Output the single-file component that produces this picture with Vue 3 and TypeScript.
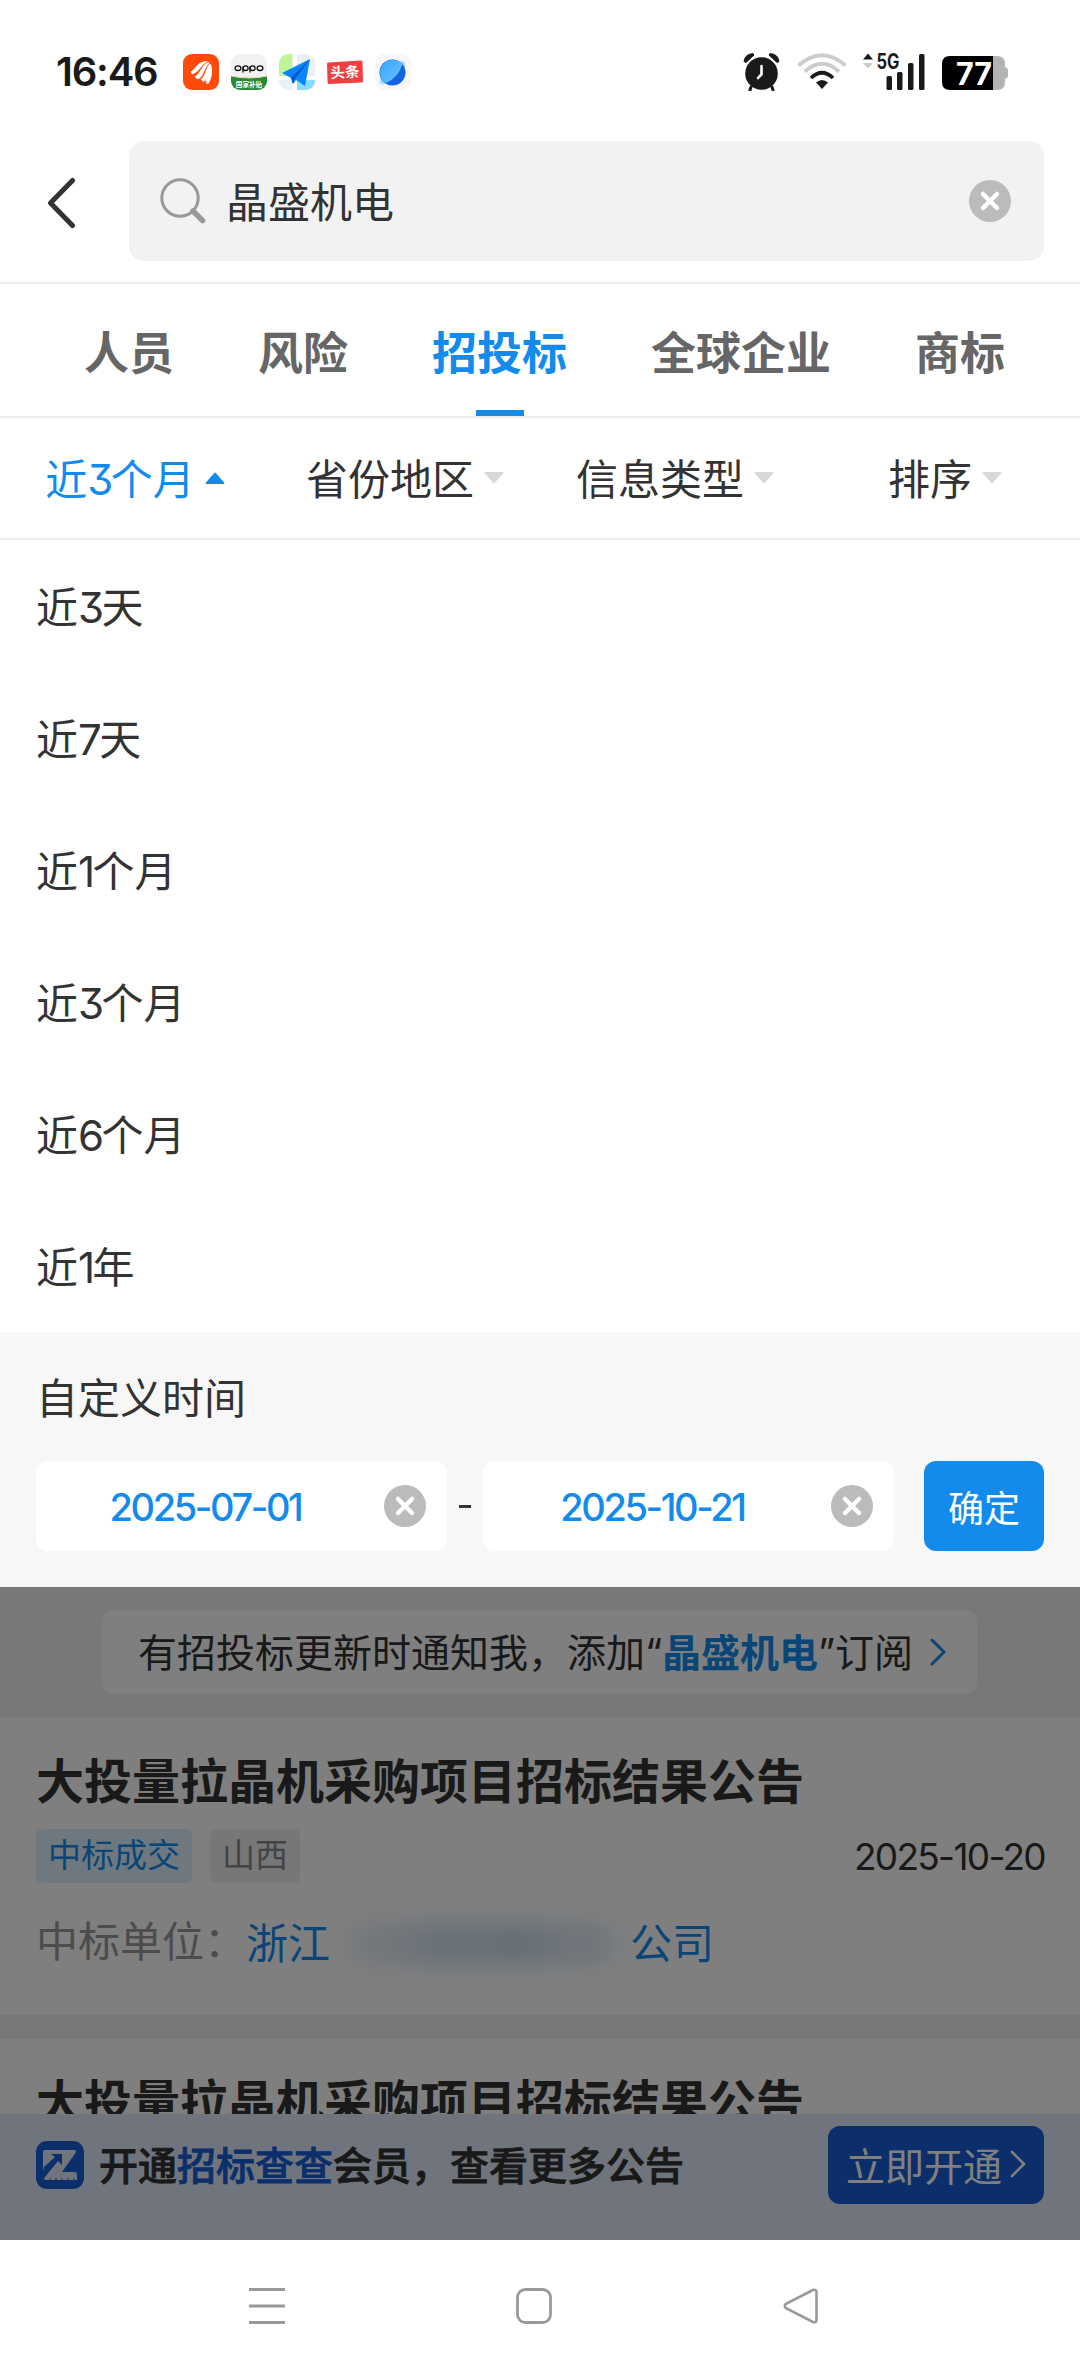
<script setup lang="ts">
import { ref } from 'vue'

interface Filter { label: string; active: boolean }
interface Notice { title: string; status: string; region: string; date: string }
interface Piece { text: string; digit: boolean }

const keyword = ref<string>('晶盛机电')
const tabs: string[] = ['人员', '风险', '招投标', '全球企业', '商标']
const activeTab = ref<string>('招投标')
const filters: Filter[] = [
  { label: '近3个月', active: true },
  { label: '省份地区', active: false },
  { label: '信息类型', active: false },
  { label: '排序', active: false },
]
const ranges: string[] = ['近3天', '近7天', '近1个月', '近3个月', '近6个月', '近1年']
const startDate = ref<string>('2025-07-01')
const endDate = ref<string>('2025-10-21')
const notice: Notice = {
  title: '大投量拉晶机采购项目招标结果公告',
  status: '中标成交',
  region: '山西',
  date: '2025-10-20',
}

// Splits a label so that its digits can be set a little tighter than the Han characters.
function pieces(label: string): Piece[] {
  return label.split(/(\d+)/).filter(Boolean).map((text) => ({ text, digit: /\d/.test(text) }))
}
</script>

<template>
  <div class="screen">
    <header class="status">
      <span class="clock">16:46</span>
      <div class="apps">
        <svg width="36" height="36" viewBox="0 0 36 36">
          <rect width="36" height="36" rx="9" fill="#ff4a0a" />
          <path d="M7.500 17.500C12 16 14 8 23 7L25 7.500C18 10 17 18 9 20.500Z M11.500 22.500C18 20 17.500 11 25.500 8L26.500 9C21 13 21.500 23 14.500 25.500Z M17.500 25.500C23.500 21 22 13.500 27 9.500L28 10.500C30 17 29 25 25 30L23 29.500L23.500 26L20.500 28Z" fill="#fff" />
        </svg>
        <svg width="36" height="36" viewBox="0 0 36 36">
          <defs><clipPath id="oppoClip"><rect width="36" height="36" rx="9" /></clipPath></defs>
          <g clip-path="url(#oppoClip)">
            <rect width="36" height="36" fill="#f1f1f1" />
            <path d="M0 22Q18 26 36 22V36H0Z" fill="#248a34" />
            <path d="M0 22Q18 26 36 22" stroke="#e8d9a0" fill="none" />
          </g>
          <g fill="none" stroke="#111" stroke-width="1.300">
            <ellipse cx="7" cy="14.200" rx="2.900" ry="2.300" /><ellipse cx="14.600" cy="14.200" rx="2.500" ry="2.300" />
            <ellipse cx="21.600" cy="14.200" rx="2.500" ry="2.300" /><ellipse cx="29" cy="14.200" rx="2.900" ry="2.300" />
            <path d="M12 12.500V18.500M19 12.500V18.500" />
          </g>
          <text x="18" y="32.500" text-anchor="middle" font-size="6.600" font-weight="700" fill="#fff" class="mini">国家补贴</text>
        </svg>
        <svg width="36" height="36" viewBox="0 0 36 36">
          <defs><clipPath id="mapClip"><rect width="36" height="36" rx="9" /></clipPath></defs>
          <g clip-path="url(#mapClip)">
            <rect width="36" height="36" fill="#fff" />
            <rect width="13.500" height="22" fill="#bff598" />
            <rect x="18" width="18" height="22" fill="#e9f1f1" />
            <rect y="26" width="14" height="10" fill="#e9f1f4" />
            <rect x="18" y="26" width="18" height="10" fill="#86dcff" />
          </g>
          <path d="M31 5L3 19L12 24L14 30L17 26L26 32Z" fill="#0a84ff" />
          <path d="M31 5L12 24L14 30L16 25Z" fill="#0557c8" />
        </svg>
        <svg width="36" height="36" viewBox="0 0 36 36">
          <path d="M1 8.500L34 6.500Q35.500 6.500 35.500 8L36 27Q36 28.500 34.500 28.600L2 30Q.6 30 .6 28.500L0 10Q0 8.600 1 8.500Z" fill="#f33f41" />
          <text x="18" y="23.500" text-anchor="middle" font-size="14.500" font-weight="700" fill="#fff" transform="rotate(-3 18 18)" class="mini">头条</text>
        </svg>
        <svg width="36" height="36" viewBox="0 0 36 36">
          <defs><linearGradient id="planet" x1="0" y1="0" x2="1" y2="1"><stop offset="0" stop-color="#39a7ff" /><stop offset="1" stop-color="#69c1ff" /></linearGradient></defs>
          <rect width="36" height="36" rx="9" fill="#f7f7f8" />
          <path d="M5 25Q3 32 10 30L30 13Q31.500 5 24 7.500Z" fill="#a9ddfa" />
          <circle cx="17.500" cy="18.500" r="13" fill="#1262e4" />
          <path d="M27.500 10Q24 23 10.500 29.500A13 13 0 1 1 27.500 10Z" fill="url(#planet)" />
        </svg>
      </div>
      <div class="signals">
        <svg class="alarm" width="37" height="38" viewBox="0 0 37 38">
          <circle cx="18.500" cy="20.500" r="16.300" fill="#1a1a1a" />
          <path d="M1 8.500Q2 1 10 .6L11 2L3 9.500Z M36 8.500Q35 1 27 .6L26 2L34 9.500Z" fill="#1a1a1a" stroke="#1a1a1a" stroke-linejoin="round" />
          <path d="M8 34L7 37M29 34L30 37" stroke="#1a1a1a" stroke-width="3" stroke-linecap="round" />
          <path d="M18.500 13V21.500L15 25" stroke="#fff" stroke-width="2.600" fill="none" stroke-linecap="round" />
        </svg>
        <svg class="wifi" width="50" height="37" viewBox="0 0 50 37">
          <g fill="none" stroke-width="3.800">
            <path d="M1.500 12.500Q25 -8 48.500 12.500" stroke="#ccc" />
            <path d="M8 18.500Q25 3 42 18.500" stroke="#ccc" />
            <path d="M14 25Q25 14.500 36 25" stroke="#1a1a1a" />
          </g>
          <path d="M19 29.500Q25 24.500 31 29.500L25 36Z" fill="#1a1a1a" />
        </svg>
        <svg class="cell" width="64" height="42" viewBox="0 -4 64 42">
          <path d="M1 7.500L6 1.500L11 7.500Z" fill="#1a1a1a" /><path d="M1 11H11L6 16.500Z" fill="#ccc" />
          <text x="14.500" y="17" font-size="21" font-weight="700" fill="#1a1a1a" textLength="23" lengthAdjust="spacingAndGlyphs" class="latin">5G</text>
          <g fill="#1a1a1a"><rect x="24.500" y="24" width="5.500" height="14" rx="1.500" /><rect x="35" y="20" width="5.500" height="18" rx="1.500" /><rect x="46" y="11" width="5.500" height="27" rx="1.500" /><rect x="57" y="2" width="5.500" height="36" rx="1.500" /></g>
        </svg>
        <svg class="battery" width="67" height="34" viewBox="0 0 67 34">
          <path d="M51 0H55Q63 0 63 8V11Q66 12 66 14V20Q66 22 63 23V26Q63 34 55 34H51Z" fill="#b3b3b3" />
          <path d="M8 0H51V34H8Q0 34 0 26V8Q0 0 8 0Z" fill="#000" />
          <text x="14" y="28.500" font-size="31" font-weight="700" fill="#fff" textLength="36" lengthAdjust="spacingAndGlyphs" class="latin">77</text>
        </svg>
      </div>
    </header>

    <div class="searchbar">
      <svg class="back" width="30" height="54" viewBox="0 0 30 54"><path d="M26.500 4.500L4.500 27L26.500 49.500" fill="none" stroke="#333" stroke-width="5" stroke-linecap="round" stroke-linejoin="round" /></svg>
      <div class="field">
        <svg width="46" height="48" viewBox="0 0 46 48"><circle cx="20" cy="21" r="18.200" fill="none" stroke="#999" stroke-width="3" /><path d="M33 34L42.500 43.500" stroke="#999" stroke-width="5.500" stroke-linecap="round" /></svg>
        <span class="keyword">{{ keyword }}</span>
        <svg class="clear" width="42" height="42" viewBox="0 0 42 42"><circle cx="21" cy="21" r="21" fill="#bbb" /><path d="M14 14L28 28M28 14L14 28" stroke="#fff" stroke-width="4.500" stroke-linecap="round" /></svg>
      </div>
    </div>

    <nav class="tabs">
      <span v-for="t in tabs" :key="t" class="tab" :class="{ on: t === activeTab }">{{ t }}</span>
    </nav>

    <div class="filters">
      <div v-for="f in filters" :key="f.label" class="filter" :class="{ on: f.active }">
        <span class="name"><span v-for="(p, i) in pieces(f.label)" :key="i" :class="{ num: p.digit }">{{ p.text }}</span></span>
        <svg width="20" height="12" viewBox="0 0 20 12">
          <path :d="f.active ? 'M1.500 11L10 1.500L18.500 11Z' : 'M1.500 1L10 10.500L18.500 1Z'" fill="currentColor" stroke="currentColor" stroke-width="1.800" stroke-linejoin="round" />
        </svg>
      </div>
    </div>

    <ul class="ranges">
      <li v-for="r in ranges" :key="r"><span v-for="(p, i) in pieces(r)" :key="i" :class="{ num: p.digit }">{{ p.text }}</span></li>
    </ul>

    <section class="custom">
      <h3>自定义时间</h3>
      <div class="row">
        <div class="date">
          <span>{{ startDate }}</span>
          <svg width="42" height="42" viewBox="0 0 42 42"><circle cx="21" cy="21" r="21" fill="#bbb" /><path d="M14 14L28 28M28 14L14 28" stroke="#fff" stroke-width="4.500" stroke-linecap="round" /></svg>
        </div>
        <i class="dash"></i>
        <div class="date">
          <span>{{ endDate }}</span>
          <svg width="42" height="42" viewBox="0 0 42 42"><circle cx="21" cy="21" r="21" fill="#bbb" /><path d="M14 14L28 28M28 14L14 28" stroke="#fff" stroke-width="4.500" stroke-linecap="round" /></svg>
        </div>
        <button class="ok">确定</button>
      </div>
    </section>

    <main class="content">
      <div class="results">
        <div class="banner">
          <div class="subscribe">
            <span>有招投标更新时通知我，添加<q>“</q><b>晶盛机电</b><q>”</q>订阅</span>
            <svg width="16" height="28" viewBox="0 0 16 28"><path d="M2 2L14 14L2 26" fill="none" stroke="#128bed" stroke-width="3" stroke-linecap="round" stroke-linejoin="round" /></svg>
          </div>
        </div>
        <article class="card first">
          <h2>{{ notice.title }}</h2>
          <div class="meta">
            <span class="tag blue">{{ notice.status }}</span>
            <span class="tag">{{ notice.region }}</span>
            <time>{{ notice.date }}</time>
          </div>
          <p class="winner">
            <span class="label">中标单位：</span>
            <span class="link">浙江</span>
            <span class="masked"><i></i></span>
            <span class="link">公司</span>
          </p>
        </article>
        <article class="card second"><h2>{{ notice.title }}</h2></article>
      </div>
      <footer class="vip">
        <svg width="48" height="48" viewBox="0 0 48 48">
          <rect width="48" height="48" rx="11" fill="#185ed6" />
          <path d="M9 9H38Q41 9 39.500 12L26 31H38Q41 31 41 34V39H10Q7 39 9 36L26 15V24L20 19L8 30Q7 28 7 25V11Q7 9 9 9Z" fill="#e1ebfa" />
          <path d="M8 26L19 16L15 13H26V24L22 20L10 32L8 31Z" fill="#185ed6" />
          <path d="M14 37V40M20 37V40M26 37V40M32 37V40M38 37V40" stroke="#185ed6" stroke-width="1" />
        </svg>
        <span class="pitch">开通<em>招标查查</em>会员，查看更多公告</span>
        <button>立即开通<svg width="16" height="28" viewBox="0 0 16 28"><path d="M2 2L14 14L2 26" fill="none" stroke="#fff" stroke-width="2.600" stroke-linecap="round" stroke-linejoin="round" /></svg></button>
      </footer>
      <div class="mask"></div>
    </main>

    <div class="sysnav">
      <svg width="36" height="36" viewBox="0 0 36 36"><path d="M0 1.500H36M0 18H36M0 34.500H36" stroke="#999" stroke-width="3" /></svg>
      <svg width="36" height="36" viewBox="0 0 36 36"><rect x="1.500" y="1.500" width="33" height="33" rx="8" fill="none" stroke="#999" stroke-width="2.800" /></svg>
      <svg width="36" height="36" viewBox="0 0 36 36"><path d="M30 2L3 15.800Q.5 18 3 20.200L30 34Q33.500 35 33.500 31.500V4.500Q33.500 1 30 2Z" fill="none" stroke="#999" stroke-width="2.600" /></svg>
    </div>
  </div>
</template>

<style>
body { margin: 0; background: #fff; }
</style>

<style scoped>
.screen {
  width: 1080px; height: 2372px; overflow: hidden; background: #fff; color: #333;
  display: flex; flex-direction: column;
  font-family: "Inter", "Noto Sans CJK SC", sans-serif; font-size: 42px; line-height: 1;
  font-feature-settings: "cv09"; box-sizing: border-box;
}
.screen * { box-sizing: border-box; }
svg { display: block; flex: none; }
.mini { font-family: "Noto Sans CJK SC", sans-serif; }
.latin { font-family: "Inter", sans-serif; }
.num { letter-spacing: -2.500px; }

.status { height: 141px; padding: 49px 0 0 56px; display: flex; align-items: flex-start; flex: none; }
.clock { width: 127px; line-height: 46px; font-size: 40px; font-weight: 600; color: #1a1a1a; letter-spacing: -1.2px; white-space: nowrap; }
.apps { display: flex; gap: 12px; padding-top: 5px; }
.signals { display: flex; padding-top: 4px; margin-left: 332px; }
.wifi { margin-left: 17px; }
.cell { margin-left: 15px; margin-top: -5px; }
.battery { margin-left: 16px; margin-top: 3px; }

.searchbar { height: 143px; border-bottom: 2px solid #ededed; display: flex; align-items: flex-start; padding-left: 46px; flex: none; }
.back { margin-top: 35px; }
.field { margin-left: 53px; width: 915px; height: 120px; border-radius: 15px; background: #f2f2f2; display: flex; align-items: center; padding: 0 33px 0 31px; }
.keyword { flex: 1; margin-left: 20px; line-height: 60px; padding-top: 4px; }

.tabs { height: 134px; border-bottom: 2px solid #ededed; display: flex; gap: 84px; padding-left: 84px; flex: none; }
.tab { font-size: 45px; font-weight: 700; color: #666; line-height: 139px; height: 132px; display: flex; flex-direction: column; align-items: center; white-space: nowrap; }
.tab.on { color: #128bed; }
.tab.on::after { content: ""; width: 48px; height: 6px; background: #128bed; margin-top: -13px; }

.filters { height: 122px; border-bottom: 2px solid #ededed; display: flex; flex: none; }
.filter { width: 270px; display: flex; align-items: center; justify-content: center; gap: 10px; white-space: nowrap; }
.name { padding-top: 4px; }
.filter svg { color: #d8d8d8; }
.filter.on, .filter.on svg { color: #128bed; }

.ranges { list-style: none; margin: 0; padding: 0; flex: none; }
.ranges li { height: 132px; line-height: 135px; padding-left: 36px; }

.custom { height: 255px; background: #f7f7f7; padding: 36px 36px 0; flex: none; }
.custom h3 { margin: 0; font-size: 42px; font-weight: 400; line-height: 62px; height: 93px; }
.row { display: flex; align-items: center; }
.date { width: 411px; height: 90px; border-radius: 12px; background: #fff; display: flex; align-items: center; padding-right: 21px; }
.date span { width: 348px; padding: 1px 9px 0 0; text-align: center; color: #128bed; font-size: 38px; font-weight: 500; letter-spacing: -2.4px; }
.dash { width: 12px; height: 3px; background: #333; margin: 0 12px; }
.ok { margin-left: 30px; width: 120px; height: 90px; border: 0; padding: 0; border-radius: 12px; background: #128bed; color: #fff; font: 400 36px "Noto Sans CJK SC", sans-serif; }

.content { position: relative; height: 653px; flex: none; display: flex; flex-direction: column; }
.results { height: 527px; overflow: hidden; background: #f0f0f0; }
.banner { height: 131px; padding: 23px 0 0 102px; }
.subscribe { width: 875px; height: 84px; border-radius: 12px; background: #fff; padding-left: 36px; display: flex; align-items: center; font-size: 39px; white-space: nowrap; }
.subscribe svg { margin-left: 17px; }
.subscribe b { color: #128bed; font-weight: 700; }
q { quotes: none; display: inline-block; width: 17px; text-align: center; }
q::before, q::after { content: none; }
.card { background: #fff; padding: 31px 36px 0; }
.first { height: 297px; margin-bottom: 24px; }
.second { height: 160px; }
h2 { margin: 0; font-size: 48px; line-height: 66px; font-weight: 600; white-space: nowrap; }
.meta { display: flex; align-items: center; margin-top: 14px; height: 54px; gap: 18px; }
.tag { height: 54px; line-height: 53px; padding: 0 12px; border-radius: 6px; font-size: 33px; background: #eee; color: #888; }
.tag.blue { background: #e0f1ff; color: #128bed; }
time { margin-left: auto; font-size: 37px; letter-spacing: -1.700px; margin-right: -1px; }
.winner { margin: 30px 0 0; display: flex; height: 60px; line-height: 58px; }
.label { color: #999; width: 210px; }
.link { color: #128bed; padding-top: 2px; }
.masked { width: 300px; padding: 10px 15px 0; }
.masked i { display: block; height: 42px; border-radius: 20px; filter: blur(12px); background: linear-gradient(90deg, #edf1f6, #dce7f2 25%, #c9dcee 38%, #d6e4f0 48%, #c7dbed 62%, #dae7f2 80%, #e0ebf5); }

.vip { height: 126px; background: #e1ebfa; display: flex; align-items: flex-start; padding: 12px 36px 0; font-size: 39px; }
.vip > svg { margin-top: 15px; }
.pitch { margin-left: 15px; line-height: 80px; font-weight: 500; white-space: nowrap; -webkit-text-stroke: .8px currentColor; }
.pitch em { font-style: normal; color: #185ed6; }
.vip button { margin-left: auto; width: 216px; height: 78px; border: 0; border-radius: 12px; background: #185ed6; color: #fff; padding: 0 0 2px 18px; font: 400 39px "Noto Sans CJK SC", sans-serif; display: flex; align-items: center; gap: 8px; white-space: nowrap; }
.mask { position: absolute; inset: 0; background: rgba(0, 0, 0, .5); }

.sysnav { height: 132px; display: flex; padding: 48px 0 0 249px; gap: 231px; background: #fff; }
</style>
